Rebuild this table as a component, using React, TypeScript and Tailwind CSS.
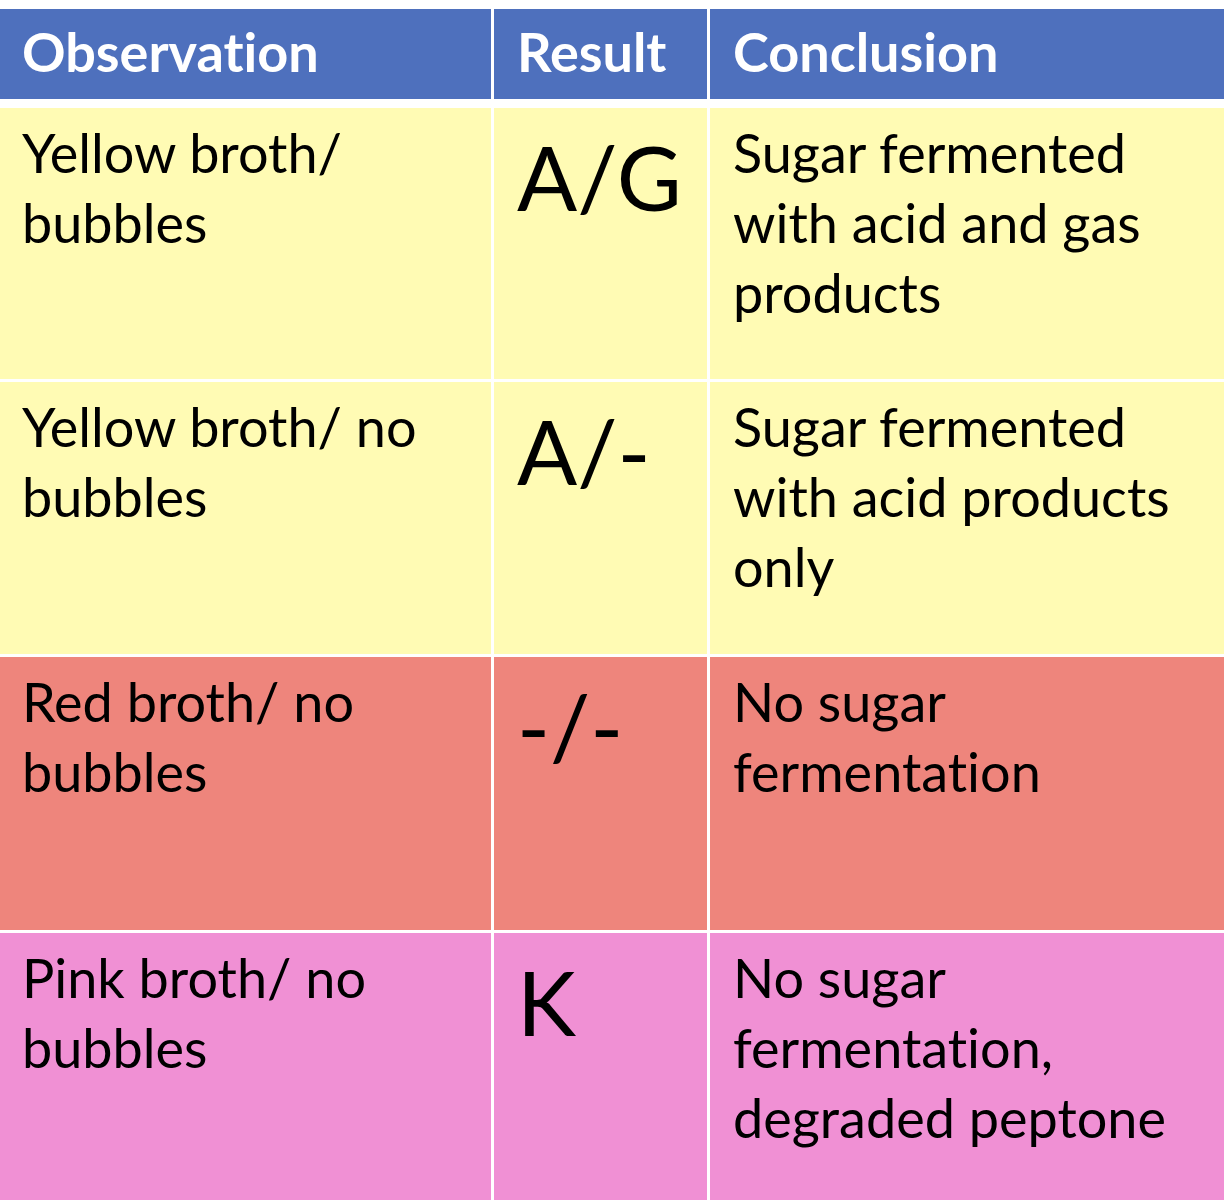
import React from "react";

const rows = [
  {
    bg: "bg-[#fffbb4]",
    h: "h-[271px]",
    obs: ["Yellow broth/", "bubbles"],
    res: "A/G",
    con: ["Sugar fermented", "with acid and gas", "products"],
  },
  {
    bg: "bg-[#fffbb4]",
    h: "h-[272px]",
    obs: ["Yellow broth/ no", "bubbles"],
    res: "A/-",
    con: ["Sugar fermented", "with acid products", "only"],
  },
  {
    bg: "bg-[#ee857c]",
    h: "h-[273px]",
    obs: ["Red broth/ no", "bubbles"],
    res: "-/-",
    con: ["No sugar", "fermentation"],
  },
  {
    bg: "bg-[#f090d4]",
    h: "h-[272px]",
    obs: ["Pink broth/ no", "bubbles"],
    res: "K",
    con: ["No sugar", "fermentation,", "degraded peptone"],
  },
];

function Lines({ lines }: { lines: string[] }) {
  return (
    <div className="whitespace-nowrap">
      {lines.map((l, i) => (
        <div key={i}>{l}</div>
      ))}
    </div>
  );
}

export default function App() {
  return (
    <div
      className="h-[1200px] w-[1224px] overflow-hidden bg-white pt-[9px] text-black [font-variant-ligatures:none]"
      style={{ fontFamily: "Lato, 'Open Sans', sans-serif" }}
    >
      <div className="grid h-[90px] grid-cols-[491px_213px_1fr] gap-x-[3px] text-[54px] font-bold leading-[70px] text-white">
        <div className="bg-[#4e70bd] pl-[22px] pt-[8px]">Observation</div>
        <div className="bg-[#4e70bd] pl-[23px] pt-[8px]">Result</div>
        <div className="bg-[#4e70bd] pl-[23px] pt-[8px]">Conclusion</div>
      </div>
      <div className="mt-[9px] flex flex-col gap-y-[3px]">
        {rows.map((r, i) => (
          <div
            key={i}
            className={`grid ${r.h} grid-cols-[491px_213px_1fr] gap-x-[3px] text-[54px] leading-[70px]`}
          >
            <div className={`${r.bg} pl-[22px] pt-[10px]`}>
              <Lines lines={r.obs} />
            </div>
            <div className={`${r.bg} pl-[23px] pt-[14px] text-[89px] leading-[110px]`}>
              {r.res}
            </div>
            <div className={`${r.bg} pl-[23px] pt-[10px]`}>
              <Lines lines={r.con} />
            </div>
          </div>
        ))}
      </div>
    </div>
  );
}
